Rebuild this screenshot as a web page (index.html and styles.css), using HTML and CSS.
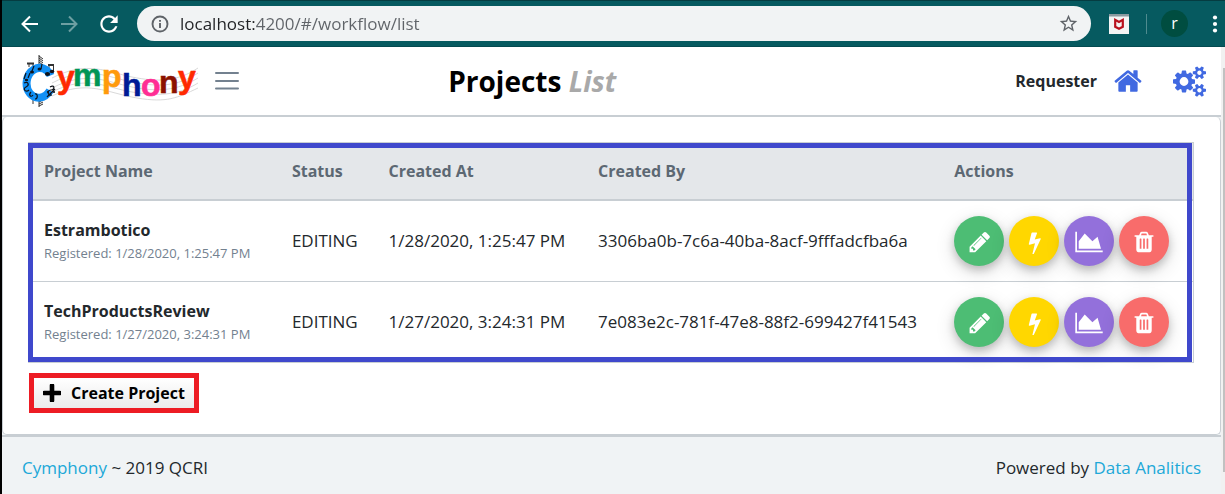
FILE: index.html
```html
<!DOCTYPE html>
<html lang="en">
<head>
<meta charset="utf-8">
<title>Cymphony</title>
<link rel="stylesheet" href="styles.css">
</head>
<body>
<svg class="sprite" aria-hidden="true">
  <symbol id="pencil" viewBox="0 0 1792 1792"><path d="M491 1536l91-91-235-235-91 91v107h128v128h107zm523-928q0-22-22-22-10 0-17 7l-542 542q-7 7-7 17 0 22 22 22 10 0 17-7l542-542q7-7 7-17zm-54-192l416 416-832 832h-416v-416zm683 96q0 53-37 90l-166 166-416-416 166-165q36-38 90-38 53 0 91 38l235 234q37 39 37 91z" transform="translate(64 0)"/></symbol>
  <symbol id="bolt" viewBox="0 0 1792 1792"><path d="M1333 566q18 20 7 44l-540 1157q-13 25-42 25-4 0-14-2-17-5-25.5-19t-4.5-30l197-808-406 101q-4 1-12 1-18 0-31-11-18-15-13-39l201-825q4-14 16-23t28-9h328q19 0 32 12.5t13 29.5q0 8-5 18l-171 463 396-98q8-2 12-2 19 0 34 15z" transform="translate(60 60)"/></symbol>
  <symbol id="area" viewBox="0 0 2048 1792"><path d="M2048 1536v128h-2048v-1536h128v1408h1920zm-384-1024l256 896h-1664v-576l448-576 576 576z"/></symbol>
  <symbol id="trash" viewBox="0 0 1792 1792"><path d="M704 1376v-704q0-14-9-23t-23-9h-64q-14 0-23 9t-9 23v704q0 14 9 23t23 9h64q14 0 23-9t9-23zm256 0v-704q0-14-9-23t-23-9h-64q-14 0-23 9t-9 23v704q0 14 9 23t23 9h64q14 0 23-9t9-23zm256 0v-704q0-14-9-23t-23-9h-64q-14 0-23 9t-9 23v704q0 14 9 23t23 9h64q14 0 23-9t9-23zm-544-992h448l-48-117q-7-9-17-11h-317q-10 2-17 11zm928 32v64q0 14-9 23t-23 9h-96v948q0 83-47 143.5t-113 60.5h-832q-66 0-113-58.5t-47-141.5v-952h-96q-14 0-23-9t-9-23v-64q0-14 9-23t23-9h309l70-167q15-37 54-63t79-26h320q40 0 79 26t54 63l70 167h309q14 0 23 9t9 23z"/></symbol>
</svg>
<div class="window">
  <header class="browser">
    <nav class="browser-nav">
      <button type="button" class="tool" aria-label="Back"><svg viewBox="0 0 24 24" width="24" height="24"><path d="M20 12H5M12 4.500L4.500 12l7.500 7.500" fill="none" stroke="#fff" stroke-width="2"/></svg></button>
      <button type="button" class="tool" aria-label="Forward"><svg viewBox="0 0 24 24" width="24" height="24"><path d="M4 12h15M12 4.500L19.500 12 12 19.500" fill="none" stroke="#6d9fa2" stroke-width="2"/></svg></button>
      <button type="button" class="tool" aria-label="Reload"><svg viewBox="0 0 24 24" width="26" height="26"><path fill="#fff" d="M17.650 6.350C16.200 4.900 14.210 4 12 4c-4.420 0-7.990 3.580-7.990 8s3.570 8 7.990 8c3.730 0 6.840-2.550 7.730-6h-2.080c-.82 2.330-3.040 4-5.650 4-3.310 0-6-2.690-6-6s2.690-6 6-6c1.660 0 3.140.69 4.220 1.780L13 11h7V4l-2.350 2.350z"/></svg></button>
    </nav>
    <div class="omnibox">
      <svg viewBox="0 0 18 18" width="18" height="18"><circle cx="9" cy="9" r="7.500" fill="none" stroke="#5f6368" stroke-width="1.900"/><path d="M9 8v5M9 5v1.800" stroke="#5f6368" stroke-width="1.900"/></svg>
      <input class="url" type="text" aria-label="Address" value="localhost:4200/#/workflow/list">
      <button type="button" class="tool" aria-label="Bookmark"><svg viewBox="0 0 24 24" width="21" height="21"><path fill="#5f6368" d="M22 9.240l-7.190-.62L12 2 9.190 8.630 2 9.240l5.460 4.730L5.820 21 12 17.270 18.180 21l-1.630-7.030L22 9.240zM12 15.400l-3.760 2.270 1-4.280-3.320-2.880 4.380-.38L12 6.100l1.710 4.040 4.380.38-3.320 2.880 1 4.280L12 15.400z"/></svg></button>
    </div>
    <div class="browser-side">
      <svg viewBox="0 0 20 20" width="20" height="20"><path fill="#f4f4f4" d="M0 0h20v20H0z"/><path fill="#8b9aa0" d="M0 0h20v2.500H0z"/><path d="M6.200 5.800v7L10 14.700l3.800-1.900v-7L10 8z" fill="none" stroke="#b8101c" stroke-width="2.200"/></svg>
      <span class="divider"></span>
      <span class="avatar">r</span>
      <button type="button" class="tool" aria-label="Menu"><svg viewBox="0 0 6 18" width="6" height="18" fill="#fff"><circle cx="3" cy="2.500" r="2.100"/><circle cx="3" cy="9" r="2.100"/><circle cx="3" cy="15.500" r="2.100"/></svg></button>
    </div>
  </header>

  <div class="viewport">
    <div class="page">
      <header class="app-header">
        <div class="brand">
          <svg class="logo" viewBox="0 0 178 54" width="178" height="54" role="img" aria-label="Cymphony">
            <g fill="none" stroke="#cfcfcf" stroke-width="0.800"><path d="M30 24C65 6 85 18 110 23S155 28 176 14"/><path d="M30 29C65 11 85 23 110 28S155 33 176 19"/><path d="M30 34C65 16 85 28 110 33S155 37 176 24"/><path d="M30 38C65 20 85 34 110 38S155 42 176 29"/><path d="M30 42C65 25 85 39 115 44S155 44 176 34"/></g>
            <g stroke="#333" stroke-width="1" fill="none"><path d="M17 1v11M17 2l4 3M17 4l4 3M17 6l4 3M17 8l4 3M17 44v9M17 46l4-2M17 48l4-2M17 50l4-2M17 52l4-2M11 46v4"/><path d="M5 9.500h7M26 11h6" stroke-width="1.800"/><path d="M7 9v4M11 9v4M27 11v4M31.500 11v6"/></g>
            <path d="M28.500 21.500C25.500 14.500 18 12 12 15.500 3.500 20.500 2.500 33 8 39.500c5 6 14.500 6 20-3" fill="none" stroke="#1290f5" stroke-width="8"/>
            <g stroke="#10131a" fill="none" stroke-width="1.200"><path d="M4 19l-2 6M2 29c4-2 6 2 2 4s0 6 3 3M9 38c-3 3 0 6 2 3M13 40c3-1 3 5 0 5M28 33c5-3 5 3 1 3s-4 6 1 5M25 43l8-8M12 12l-2 5M20 10l-1 5M6 24l2-5"/></g>
            <g fill="#10131a"><ellipse cx="10" cy="18" rx="2" ry="1.500"/><ellipse cx="17.500" cy="15" rx="2" ry="1.500"/><ellipse cx="25.500" cy="20" rx="2.600" ry="1.900"/><ellipse cx="30" cy="17.500" rx="2.300" ry="1.700"/><ellipse cx="4.500" cy="26" rx="1.700" ry="1.300"/><circle cx="32" cy="38" r="1.100"/><circle cx="26" cy="38" r="1.100"/></g>
            <g class="logo-letters"><text x="35" y="34" fill="#ff2a00" stroke="#ff2a00">y</text><text x="51" y="32" fill="#009555" stroke="#009555">m</text><text x="80" y="33" fill="#ff9a0c" stroke="#ff9a0c">p</text><text x="100" y="42" fill="#001a96" stroke="#001a96">h</text><text x="119" y="42" fill="#ff2e94" stroke="#ff2e94">o</text><text x="137" y="39" fill="#8c1100" stroke="#8c1100">n</text><text x="156" y="34" fill="#ff2a00" stroke="#ff2a00">y</text></g>
          </svg>
          <button type="button" class="tool" aria-label="Toggle menu"><svg viewBox="0 0 24 20" width="24" height="20"><path d="M1 2h22M1 10h22M1 17.500h22" stroke="#73818f" stroke-width="2" stroke-linecap="round"/></svg></button>
        </div>
        <h1>Projects <em>List</em></h1>
        <nav class="user-nav">
          <span class="role">Requester</span>
          <a href="#" aria-label="Home"><svg viewBox="0 0 1792 1792" width="30" height="30"><path d="M1472 992v480q0 26-19 45t-45 19h-384v-384h-256v384h-384q-26 0-45-19t-19-45v-480q0-1 .5-3t.5-3l575-474 575 474q1 2 1 6zm223-69l-62 74q-8 9-21 11h-3q-13 0-21-7l-692-577-692 577q-12 8-24 7-13-2-21-11l-62-74q-8-10-7-23.500t11-21.500l719-599q32-26 76-26t76 26l244 204v-195q0-14 9-23t23-9h192q14 0 23 9t9 23v408l219 182q10 8 11 21.500t-7 23.500z"/></svg></a>
          <a href="#" aria-label="Settings"><svg viewBox="0 0 1920 1792" width="33" height="31"><path d="M896 896q0-106-75-181t-181-75-181 75-75 181 75 181 181 75 181-75 75-181zm768 512q0-52-38-90t-90-38-90 38-38 90q0 53 37.500 90.500t90.500 37.500 90.500-37.500 37.500-90.500zm0-1024q0-52-38-90t-90-38-90 38-38 90q0 53 37.500 90.500t90.500 37.500 90.500-37.500 37.500-90.500zm-384 421v185q0 10-7 19.500t-16 10.500l-155 24q-11 35-32 76 34 48 90 115 7 11 7 20 0 12-7 19-23 30-82.500 89.500t-78.500 59.500q-11 0-21-7l-115-90q-37 19-77 31-11 108-23 155-7 24-30 24h-186q-11 0-20-7.500t-10-17.500l-23-153q-34-10-75-31l-118 89q-7 7-20 7-11 0-21-8-144-133-144-160 0-9 7-19 10-14 41-53t47-61q-23-44-35-82l-152-24q-10-1-17-9.500t-7-19.500v-185q0-10 7-19.500t16-10.500l155-24q11-35 32-76-34-48-90-115-7-11-7-20 0-12 7-20 22-30 82-89t79-59q11 0 21 7l115 90q34-18 77-32 11-108 23-154 7-24 30-24h186q11 0 20 7.500t10 17.500l23 153q34 10 75 31l118-89q8-7 20-7 11 0 21 8 144 133 144 160 0 8-7 19-12 16-42 54t-45 60q23 48 34 82l152 23q10 2 17 10.500t7 19.500zm640 533v140q0 16-149 31-12 27-30 52 51 113 51 138 0 4-4 7-122 71-124 71-8 0-46-47t-52-68q-20 2-30 2t-30-2q-14 21-52 68t-46 47q-2 0-124-71-4-3-4-7 0-25 51-138-18-25-30-52-149-15-149-31v-140q0-16 149-31 13-29 30-52-51-113-51-138 0-4 4-7 4-2 35-20t59-34 30-16q8 0 46 46.500t52 67.500q20-2 30-2t30 2q51-71 92-112l6-2q4 0 124 70 4 3 4 7 0 25-51 138 17 23 30 52 149 15 149 31zm0-1024v140q0 16-149 31-12 27-30 52 51 113 51 138 0 4-4 7-122 71-124 71-8 0-46-47t-52-68q-20 2-30 2t-30-2q-14 21-52 68t-46 47q-2 0-124-71-4-3-4-7 0-25 51-138-18-25-30-52-149-15-149-31v-140q0-16 149-31 13-29 30-52-51-113-51-138 0-4 4-7 4-2 35-20t59-34 30-16q8 0 46 46.500t52 67.500q20-2 30-2t30 2q51-71 92-112l6-2q4 0 124 70 4 3 4 7 0 25-51 138 17 23 30 52 149 15 149 31z"/></svg></a>
        </nav>
      </header>

      <main class="card">
        <div class="table-frame">
          <table>
            <colgroup><col class="c-name"><col class="c-status"><col class="c-created"><col class="c-by"><col></colgroup>
            <thead>
              <tr><th>Project Name</th><th>Status</th><th>Created At</th><th>Created By</th><th>Actions</th></tr>
            </thead>
            <tbody>
              <tr>
                <td><strong>Estrambotico</strong><small>Registered: 1/28/2020, 1:25:47 PM</small></td>
                <td>EDITING</td><td>1/28/2020, 1:25:47 PM</td><td>3306ba0b-7c6a-40ba-8acf-9fffadcfba6a</td>
                <td><div class="actions">
                  <button type="button" class="act edit" aria-label="Edit"><svg><use href="#pencil"/></svg></button>
                  <button type="button" class="act run" aria-label="Run"><svg><use href="#bolt"/></svg></button>
                  <button type="button" class="act stats" aria-label="Statistics"><svg class="wide"><use href="#area"/></svg></button>
                  <button type="button" class="act remove" aria-label="Delete"><svg><use href="#trash"/></svg></button>
                </div></td>
              </tr>
              <tr>
                <td><strong>TechProductsReview</strong><small>Registered: 1/27/2020, 3:24:31 PM</small></td>
                <td>EDITING</td><td>1/27/2020, 3:24:31 PM</td><td>7e083e2c-781f-47e8-88f2-699427f41543</td>
                <td><div class="actions">
                  <button type="button" class="act edit" aria-label="Edit"><svg><use href="#pencil"/></svg></button>
                  <button type="button" class="act run" aria-label="Run"><svg><use href="#bolt"/></svg></button>
                  <button type="button" class="act stats" aria-label="Statistics"><svg class="wide"><use href="#area"/></svg></button>
                  <button type="button" class="act remove" aria-label="Delete"><svg><use href="#trash"/></svg></button>
                </div></td>
              </tr>
            </tbody>
          </table>
        </div>
        <button type="button" class="create"><svg viewBox="0 0 18 18" width="18" height="18"><path d="M9 1.500v15M1.500 9h15" stroke="#000" stroke-width="4.600" stroke-linecap="round"/></svg>Create Project</button>
      </main>

      <footer class="app-footer">
        <span><a href="#">Cymphony</a> ~ 2019 QCRI</span>
        <span>Powered by <a href="#">Data Analitics</a></span>
      </footer>
    </div>
    <div class="scrollbar"><div class="thumb"></div></div>
  </div>
</div>
</body>
</html>
```
FILE: styles.css
```css
* { box-sizing: border-box; }
body {
  margin: 0;
  font: 17px/24px "Open Sans", "Noto Sans", sans-serif;
  color: #23282c;
  background: #fff;
}
svg { display: block; flex: none; }
a { color: #20a8d8; text-decoration: none; }
button { font: inherit; cursor: pointer; }
.sprite { position: absolute; width: 0; height: 0; }
.window {
  display: flex;
  flex-direction: column;
  min-height: 100vh;
  border-left: 2px solid #000;
}
.tool { display: flex; padding: 0; border: 0; background: none; }

.browser {
  display: flex;
  align-items: center;
  height: 47px;
  padding-right: 7px;
  background: #065a60;
  border-top: 1px solid #053c41;
  border-bottom: 1px solid #044a50;
}
.browser-nav { display: flex; align-items: center; gap: 15px; padding: 0 15px 0 16px; }
.omnibox {
  display: flex;
  flex: 1;
  align-items: center;
  gap: 11px;
  height: 35px;
  padding: 0 12px 0 14px;
  border-radius: 18px;
  background: #f1f3f4;
}
.url {
  flex: 1;
  min-width: 0;
  padding: 0;
  border: 0;
  outline: 0;
  font: 17px/24px "Open Sans", "Noto Sans", sans-serif;
  color: transparent;
  background: linear-gradient(90deg, #202124 76px, #5f6368 76px);
  background-clip: text;
  -webkit-background-clip: text;
}
.browser-side { display: flex; align-items: center; padding-left: 18px; }
.divider { width: 1px; height: 20px; margin: 0 14px 0 17px; background: #4f8b8f; }
.avatar {
  width: 27px;
  height: 27px;
  margin-right: 24px;
  border-radius: 50%;
  background: #004d40;
  color: #fff;
  font-size: 16px;
  line-height: 26px;
  text-align: center;
}

.viewport { display: flex; flex: 1; }
.page { display: flex; flex: 1; flex-direction: column; min-width: 0; background: #f0f3f5; }
.scrollbar { width: 4px; padding: 21px 0 23px 2px; background: #f1f1f1; display: flex; }
.thumb { flex: 1; background: #c1c1c1; }

.app-header {
  display: flex;
  align-items: center;
  padding: 7px 15px 7px 20px;
  border-bottom: 2px solid #c8ced3;
  background: #fff;
}
.brand { display: flex; flex: 0 0 36%; align-items: center; gap: 15px; }
.logo-letters { font: bold 32px "Liberation Sans", Arial, sans-serif; stroke-width: 0.6px; }
h1 { margin: 0; font-size: 28px; line-height: 36px; font-weight: 700; color: #000; }
h1 em { color: #a9a9a9; }
.user-nav { display: flex; align-items: center; margin-left: auto; }
.user-nav a { margin-left: 16px; }
.user-nav a + a { margin-left: 30px; }
.user-nav svg { fill: #4169e1; }
.role { font-size: 16px; font-weight: 700; }

.card {
  flex: 1;
  padding: 25px 26px 21px 25px;
  border: 1px solid #c8ced3;
  border-top: 0;
  border-radius: 5px;
  background: #fff;
}
.table-frame { position: relative; border: 1px solid #c8ced3; }
.table-frame::after {
  content: "";
  position: absolute;
  inset: 0 1px 0 -1px;
  border: 5px solid #3f48cc;
  pointer-events: none;
}
table { width: 100%; table-layout: fixed; border-collapse: collapse; }
.c-name { width: 21.300%; }
.c-status { width: 8.300%; }
.c-created { width: 18%; }
.c-by { width: 30.600%; }
th, td { padding: 0 0 0 15px; text-align: left; white-space: nowrap; }
th {
  height: 57px;
  border-bottom: 2px solid #c8ced3;
  background: #e4e7ea;
  color: #5c6873;
  font-size: 16px;
  font-weight: 700;
}
td { height: 81px; }
tbody tr + tr td { border-top: 1px solid #c8ced3; }
td strong { display: block; font-size: 16px; font-weight: 700; }
td small { display: block; font-size: 13px; line-height: 22px; color: #73818f; }
.actions { display: flex; gap: 5px; }
.act {
  display: flex;
  align-items: center;
  justify-content: center;
  width: 50px;
  height: 50px;
  padding: 0;
  border: 0;
  border-radius: 50%;
  box-shadow: 0 4px 8px rgba(0, 0, 0, 0.2), 0 6px 20px rgba(0, 0, 0, 0.14);
}
.act svg { width: 24px; height: 24px; margin-top: 3px; fill: #fff; }
.act .wide { width: 28px; }
.edit { background: #4dbd74; }
.run { background: #ffd700; }
.stats { background: #9370db; }
.remove { background: #f86c6b; }
.create {
  display: flex;
  align-items: center;
  gap: 10px;
  height: 40px;
  margin: 10px 0 0 1px;
  padding: 0 9px;
  border: 5px solid #ed1c24;
  background: linear-gradient(#fff, #ebebeb);
  color: #000;
  font-size: 16px;
  font-weight: 700;
}

.app-footer {
  display: flex;
  align-items: center;
  justify-content: space-between;
  height: 60px;
  padding: 4px 20px 0;
  border-top: 2px solid #c8ced3;
}
```
